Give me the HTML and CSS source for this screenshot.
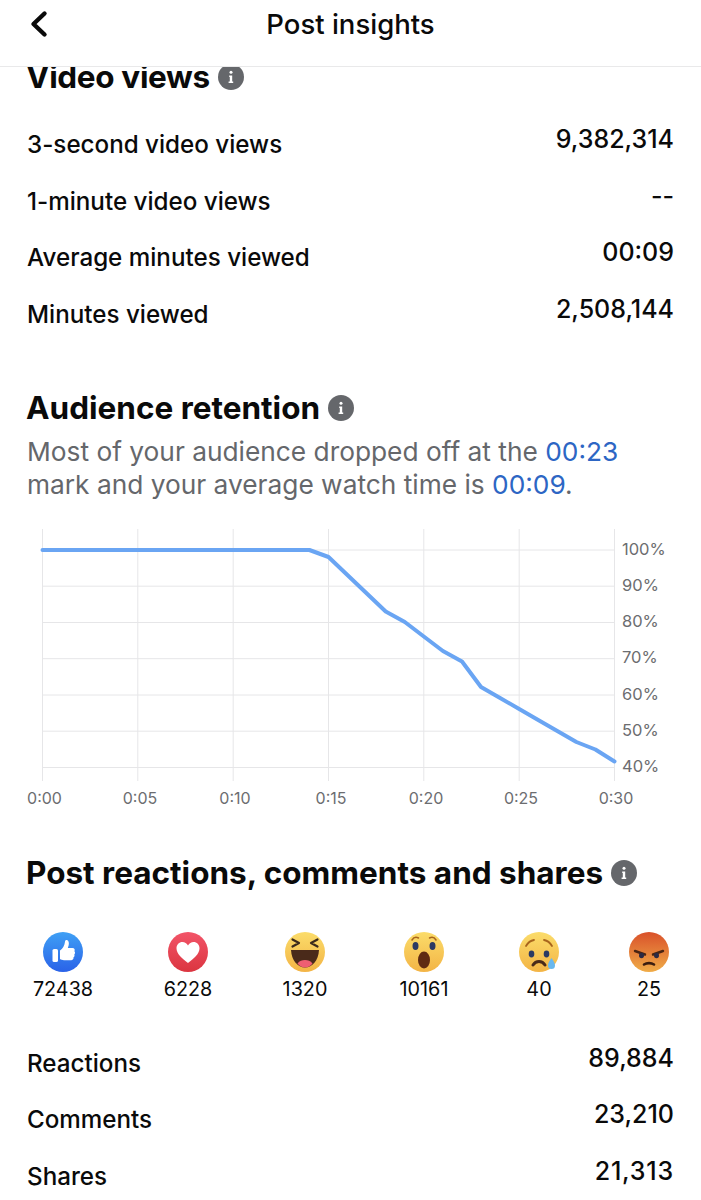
FILE: index.html
```html
<!DOCTYPE html>
<html lang="en">
<head>
<meta charset="utf-8">
<title>Post insights</title>
<link rel="stylesheet" href="styles.css">
</head>
<body>
<div class="page">
  <header class="topbar">
    <button class="back" aria-label="Back">
      <svg width="22" height="30" viewBox="0 0 22 30"><path d="M17.5 4.500 6.500 15l11 10.500" fill="none" stroke="#0a0a0a" stroke-width="4.400" stroke-linecap="round" stroke-linejoin="round"/></svg>
    </button>
    <h1 class="title">Post insights</h1>
  </header>

  <section class="views">
    <h2 class="heading heading-tight">Video views
      <svg class="info" viewBox="0 0 26 26"><circle cx="13" cy="13" r="13" fill="#65676b"/><circle cx="13" cy="8.300" r="1.500" fill="#fff"/><path d="M11.200 11.500h3v6h1v1.600h-4.600v-1.600h1.200v-4.400h-.6z" fill="#fff"/></svg>
    </h2>
    <div class="stats">
      <div class="stat"><span class="stat-label">3-second video views</span><span class="stat-value">9,382,314</span></div>
      <div class="stat"><span class="stat-label">1-minute video views</span><span class="stat-value">--</span></div>
      <div class="stat"><span class="stat-label">Average minutes viewed</span><span class="stat-value">00:09</span></div>
      <div class="stat"><span class="stat-label">Minutes viewed</span><span class="stat-value">2,508,144</span></div>
    </div>
  </section>

  <section class="retention">
    <h2 class="heading">Audience retention
      <svg class="info" viewBox="0 0 26 26"><circle cx="13" cy="13" r="13" fill="#65676b"/><circle cx="13" cy="8.300" r="1.500" fill="#fff"/><path d="M11.200 11.500h3v6h1v1.600h-4.600v-1.600h1.200v-4.400h-.6z" fill="#fff"/></svg>
    </h2>
    <p class="summary">Most of your audience dropped off at the <span class="link">00:23</span><br>mark and your average watch time is <span class="link">00:09</span>.</p>
  </section>

  <svg class="chart" width="701" height="292" viewBox="0 0 701 292">
    <g class="grid-h">
      <path d="M42.500 30H614.500M42.500 66.200H614.500M42.500 102.500H614.500M42.500 138.700H614.500M42.500 175H614.500M42.500 211.200H614.500M42.500 247.500H614.500"/>
    </g>
    <g class="grid-v">
      <path d="M42.500 9V261M137.800 9V261M233.200 9V261M328.500 9V261M423.800 9V261M519.200 9V261M614.500 9V261"/>
    </g>
    <polyline class="curve" points="42.500,30 309.400,30 328.500,37 385.700,91.500 404.800,102 423.800,116.500 442.900,131 462,141.500 481,167 500.100,178 519.200,189 538.200,200 557.300,211 576.400,222 595.400,229.500 614.500,241.500"/>
    <g class="axis-y">
      <text x="622" y="35">100%</text>
      <text x="622" y="71">90%</text>
      <text x="622" y="107">80%</text>
      <text x="622" y="143">70%</text>
      <text x="622" y="180">60%</text>
      <text x="622" y="216">50%</text>
      <text x="622" y="252">40%</text>
    </g>
    <g class="axis-x">
      <text x="44.500" y="284">0:00</text>
      <text x="140" y="284">0:05</text>
      <text x="235" y="284">0:10</text>
      <text x="331" y="284">0:15</text>
      <text x="426" y="284">0:20</text>
      <text x="521" y="284">0:25</text>
      <text x="616" y="284">0:30</text>
    </g>
  </svg>

  <section class="engagement">
    <h2 class="heading">Post reactions, comments and shares
      <svg class="info" viewBox="0 0 26 26"><circle cx="13" cy="13" r="13" fill="#65676b"/><circle cx="13" cy="8.300" r="1.500" fill="#fff"/><path d="M11.200 11.500h3v6h1v1.600h-4.600v-1.600h1.200v-4.400h-.6z" fill="#fff"/></svg>
    </h2>
  </section>

  <div class="reactions">
    <div class="reaction">
      <svg class="emoji" viewBox="0 0 40 40">
        <defs><linearGradient id="gLike" x1="0" y1="0" x2="0" y2="1"><stop offset="0" stop-color="#3fa0f5"/><stop offset="1" stop-color="#2a62e8"/></linearGradient></defs>
        <circle cx="20" cy="20" r="20" fill="url(#gLike)"/>
        <rect x="9.500" y="17" width="5.500" height="13" rx="1.600" fill="#fff"/>
        <path d="M17 18.500c2.600-2 4.600-4.600 5-8.800.1-1.300 1-2 2-1.600 1.700.6 2.300 3 1.600 5.400l-.8 2.500h4.700c1.900 0 2.800 1.800 1.900 3.200.9 1 .8 2.400-.1 3.200.5 1.100.2 2.300-.8 2.900.3 1.600-.8 3-2.400 3H21c-1.600 0-3-.5-4-1.200z" fill="#fff"/>
      </svg>
      <span class="count">72438</span>
    </div>
    <div class="reaction">
      <svg class="emoji" viewBox="0 0 40 40">
        <defs><linearGradient id="gLove" x1="0" y1="0" x2="0" y2="1"><stop offset="0" stop-color="#f25468"/><stop offset="1" stop-color="#db3540"/></linearGradient></defs>
        <circle cx="20" cy="20" r="20" fill="url(#gLove)"/>
        <path d="M20 31C14 26.300 8.500 22 8.500 16.200 8.500 12.600 11.200 10 14.400 10c2.400 0 4.400 1.300 5.600 3.400C21.200 11.300 23.200 10 25.600 10c3.200 0 5.900 2.600 5.900 6.200C31.500 22 26 26.300 20 31z" fill="#fff"/>
      </svg>
      <span class="count">6228</span>
    </div>
    <div class="reaction">
      <svg class="emoji" viewBox="0 0 40 40">
        <defs><linearGradient id="gFace" x1="0" y1="0" x2="0" y2="1"><stop offset="0" stop-color="#fbdc6a"/><stop offset="1" stop-color="#f3b445"/></linearGradient></defs>
        <circle cx="20" cy="20" r="20" fill="url(#gFace)"/>
        <path d="M7.500 7.500l6.500 3.500-6.500 3.500M32.500 7.500L26 11l6.500 3.500" fill="none" stroke="#3b2a1c" stroke-width="2.200" stroke-linecap="round" stroke-linejoin="round"/>
        <path d="M6 18h28C33.500 28.500 27 35.500 20 35.500S6.500 28.500 6 18z" fill="#4a2a1a"/>
        <path d="M12.500 31.500c2-2.600 4.500-3.500 7.500-3.500s5.500.9 7.500 3.500c-2 2.500-4.600 4-7.500 4s-5.500-1.500-7.500-4z" fill="#ee5f72"/>
      </svg>
      <span class="count">1320</span>
    </div>
    <div class="reaction">
      <svg class="emoji" viewBox="0 0 40 40">
        <circle cx="20" cy="20" r="20" fill="url(#gFace)"/>
        <path d="M8 8c1.500-2.500 4-3.300 6.500-2M32 8c-1.500-2.500-4-3.300-6.500-2" fill="none" stroke="#a8641c" stroke-width="1.500" stroke-linecap="round"/>
        <ellipse cx="11.500" cy="14" rx="3" ry="4" fill="#2c3a63"/>
        <ellipse cx="28.500" cy="14" rx="3" ry="4" fill="#2c3a63"/>
        <ellipse cx="20" cy="28" rx="6" ry="8.500" fill="#5f2a12"/>
      </svg>
      <span class="count">10161</span>
    </div>
    <div class="reaction">
      <svg class="emoji" viewBox="0 0 40 40">
        <circle cx="20" cy="20" r="20" fill="url(#gFace)"/>
        <path d="M7 14c2-3.500 5-5.500 8-6M33 14c-2-3.500-5-5.500-8-6" fill="none" stroke="#a8641c" stroke-width="1.800" stroke-linecap="round"/>
        <ellipse cx="12.500" cy="22" rx="2.800" ry="3.400" fill="#2c3a63"/>
        <ellipse cx="27.500" cy="22" rx="2.800" ry="3.400" fill="#2c3a63"/>
        <path d="M14 33c1.500-2.500 3.500-3.500 6-3.500s4.500 1 6 3.500" fill="none" stroke="#4a2a1a" stroke-width="3" stroke-linecap="round"/>
        <path d="M32.500 26c2.500 3.500 3.500 5.500 3.500 7.500a3.500 3.500 0 0 1-7 0c0-2 1-4 3.500-7.500z" fill="#6ab8ee"/>
      </svg>
      <span class="count">40</span>
    </div>
    <div class="reaction">
      <svg class="emoji" viewBox="0 0 40 40">
        <defs><linearGradient id="gAngry" x1="0" y1="0" x2="0" y2="1"><stop offset="0" stop-color="#d9512a"/><stop offset="1" stop-color="#f0ac48"/></linearGradient></defs>
        <circle cx="20" cy="20" r="20" fill="url(#gAngry)"/>
        <path d="M6 19l10 3.500M34 19l-10 3.500" stroke="#4a2412" stroke-width="2.400" stroke-linecap="round"/>
        <ellipse cx="12.500" cy="23.500" rx="2.500" ry="2.800" fill="#2c2a44"/>
        <ellipse cx="27.500" cy="23.500" rx="2.500" ry="2.800" fill="#2c2a44"/>
        <path d="M15 32.500c1.500-1 3-1.400 5-1.400s3.500.4 5 1.400" fill="none" stroke="#3b1e10" stroke-width="2.600" stroke-linecap="round"/>
      </svg>
      <span class="count">25</span>
    </div>
  </div>

  <div class="stats totals">
    <div class="stat"><span class="stat-label">Reactions</span><span class="stat-value">89,884</span></div>
    <div class="stat"><span class="stat-label">Comments</span><span class="stat-value">23,210</span></div>
    <div class="stat"><span class="stat-label">Shares</span><span class="stat-value stat-value-wide">21,313</span></div>
  </div>
</div>
</body>
</html>
```

FILE: styles.css
```css
* { box-sizing: border-box; }
html, body { margin: 0; padding: 0; background: #fff; }
body { font-family: Inter, "Liberation Sans", sans-serif; color: #0a0a0a; }
.page { width: 701px; height: 1200px; overflow: hidden; }

.topbar {
  position: relative;
  z-index: 1;
  height: 67px;
  display: flex;
  align-items: flex-start;
  justify-content: center;
  padding-top: 6px;
  background: #fff;
  border-bottom: 1px solid #e9e9ea;
}
.back {
  position: absolute;
  left: 27px;
  top: 9px;
  padding: 0;
  border: 0;
  background: none;
  line-height: 0;
}
.title { margin: 0; font-size: 27.500px; line-height: 36px; font-weight: 500; }

.heading {
  margin: 0;
  display: flex;
  align-items: center;
  gap: 8px;
  font-size: 31.500px;
  line-height: 36px;
  font-weight: 700;
}
.heading-tight { letter-spacing: -0.35px; }
.info { width: 26px; height: 26px; flex: none; }

.views { padding: 0 27px 0 26px; margin-top: -8px; }
.stats { display: flex; flex-direction: column; }
.views .stats { margin-top: 27px; padding-left: 1px; }
.stat {
  display: flex;
  justify-content: space-between;
  align-items: flex-start;
  height: 56.700px;
}
.stat-label { font-size: 24.200px; line-height: 34px; font-weight: 500; padding-top: 6px; }
.stat-value { font-size: 25px; line-height: 34px; font-weight: 500; }
.stat-value-wide { letter-spacing: 0.8px; }

.retention { padding: 0 27px 0 26px; margin-top: 41px; }
.summary { margin: 9px 0 0; font-size: 26.300px; line-height: 33px; color: #65676b; padding-left: 1px; }
.link { color: #2d66c4; }

.chart { display: block; margin-top: 19px; }
.grid-h path, .grid-v path { fill: none; stroke: #e6e6e8; stroke-width: 1; }
.curve { fill: none; stroke: #6aa5f3; stroke-width: 4; stroke-linejoin: round; stroke-linecap: round; }
.axis-y text { font-size: 16.500px; fill: #6c6d70; }
.axis-x text { font-size: 16px; fill: #6c6d70; text-anchor: middle; }

.engagement { padding: 0 27px 0 26px; margin-top: 43px; }
.reactions {
  display: grid;
  grid-template-columns: 100px 150px 84px 154px 76px 124px;
  padding-left: 13px;
  margin-top: 41px;
}
.reaction { display: flex; flex-direction: column; align-items: center; gap: 5px; }
.reaction:last-child { justify-self: end; width: 104px; }
.emoji { width: 40px; height: 40px; overflow: visible; }
.count { font-size: 19.800px; line-height: 24px; }

.totals { padding: 0 27px; margin-top: 40px; }
```
